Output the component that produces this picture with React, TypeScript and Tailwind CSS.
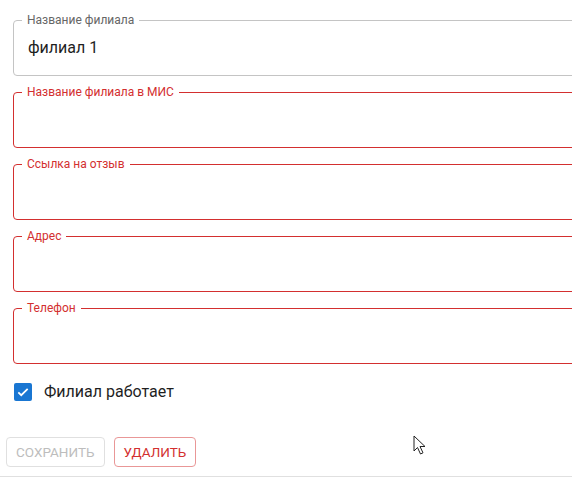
import React from 'react';

type FieldProps = {
  label: string;
  value?: string;
  error?: boolean;
};

function OutlinedField({ label, value, error }: FieldProps) {
  const border = error ? 'border-[#d32f2f]' : 'border-[#c4c4c4]';
  const labelColor = error ? 'text-[#d32f2f]' : 'text-[#666666]';
  return (
    <fieldset className={`m-0 h-[62px] w-[620px] rounded-[4px] border ${border} px-[8px] pb-0 pt-0`}>
      <legend className={`px-[5px] text-[12px] leading-[12px] ${labelColor}`}>{label}</legend>
      <input
        readOnly
        value={value ?? ''}
        className="block h-[45px] w-full bg-transparent px-[6px] pb-[2px] text-[16px] text-[#1f1f1f] outline-none"
      />
    </fieldset>
  );
}

function App() {
  return (
    <div className="relative h-[478px] w-[572px] overflow-hidden bg-white font-['Roboto',sans-serif]">
      <div className="flex flex-col gap-[10px] pl-[13px] pt-[14px]">
        <OutlinedField label="Название филиала" value="филиал 1" />
        <OutlinedField label="Название филиала в МИС" error />
        <OutlinedField label="Ссылка на отзыв" error />
        <OutlinedField label="Адрес" error />
        <OutlinedField label="Телефон" error />
      </div>

      {/* Checkbox */}
      <label className="mt-[16px] flex items-center gap-[12px] pl-[14px]">
        <span className="flex h-[18px] w-[18px] items-center justify-center rounded-[2px] bg-[#1976d2]">
          <svg viewBox="0 0 24 24" className="h-[14px] w-[14px]" fill="none" stroke="white" strokeWidth="3">
            <path d="M4 12.5l5 5L20 6.5" />
          </svg>
        </span>
        <span className="text-[16px] text-[#1f1f1f]">Филиал работает</span>
      </label>

      {/* Actions */}
      <div className="mt-[33px] flex gap-[9px] pl-[6px]">
        <button
          disabled
          className="h-[30px] rounded-[4px] border border-[#e0e0e0] px-[9px] text-[13.5px] font-normal uppercase text-[#bdbdbd]"
        >
          Сохранить
        </button>
        <button className="h-[30px] rounded-[4px] border border-[#e99797] px-[9px] text-[13.5px] font-normal uppercase text-[#d32f2f]">
          Удалить
        </button>
      </div>

      <div className="mt-[9px] h-px w-full bg-[#e0e0e0]" />

      {/* Mouse cursor */}
      <svg className="absolute left-[413px] top-[435px]" width="14" height="21" viewBox="0 0 14 21">
        <path d="M1 1v15l3.5-3.5 3 6.5 2.5-1.2-3-6.3H12z" fill="white" stroke="#222" strokeWidth="1" />
      </svg>
    </div>
  );
}

export default App;
